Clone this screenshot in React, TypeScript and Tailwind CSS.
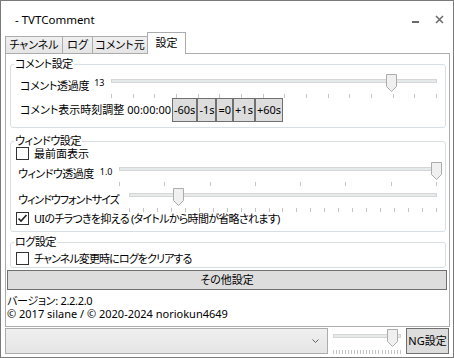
function Slider({ className, value, ticks, tickTop = 20 }: { className: string; value: number; ticks: number; tickTop?: number }) {
  return (
    <div className={`relative h-[24px] shrink-0 ${className}`}>
      <div className="absolute left-[5px] right-[5px] top-[5px] h-[4px] bg-[#e7eaea] border border-[#d6d6d6]" />
      <div className="absolute left-[5px] right-[5px] flex justify-between" style={{ top: tickTop }}>
        {Array.from({ length: ticks }).map((_, i) => (
          <div key={i} className="w-px h-[4px] bg-[#c4c4c4]" />
        ))}
      </div>
      <svg
        className="absolute top-0"
        style={{ left: `calc((100% - 11px) * ${value})` }}
        width="11"
        height="18"
        viewBox="0 0 11 18"
      >
        <path d="M0.5 0.5H10.5V12.5L5.5 17.5L0.5 12.5Z" fill="#f0f0f0" stroke="#acacac" />
      </svg>
    </div>
  )
}

function Check({ checked = false }: { checked?: boolean }) {
  return (
    <div className="w-[13px] h-[13px] shrink-0 border border-[#333] bg-white flex items-center justify-center">
      {checked && (
        <svg width="11" height="11" viewBox="0 0 11 11">
          <path d="M1.5 5.5L4 8L9.5 2" fill="none" stroke="#212121" strokeWidth="1.6" />
        </svg>
      )}
    </div>
  )
}

function Group({ title, className, children }: { title: string; className?: string; children: React.ReactNode }) {
  return (
    <fieldset className={`border border-[#d5dfe5] rounded-[3px] ml-[4px] mr-[3px] ${className ?? ''}`}>
      <legend className="ml-[3px] px-[1px] leading-[12px] tracking-[-0.4px]">{title}</legend>
      {children}
    </fieldset>
  )
}

function Btn({ children }: { children: React.ReactNode }) {
  return (
    <div className="h-[24px] px-[1px] shrink-0 flex items-center bg-[#dddddd] border border-[#707070]">{children}</div>
  )
}

export default function App() {
  return (
    <div className="w-[454px] h-[358px] bg-white border border-[#7a7a7a] flex flex-col text-[11px] text-black font-['Noto_Sans','Noto_Sans_CJK_JP',sans-serif] [font-feature-settings:'palt'] leading-[14px] whitespace-nowrap overflow-hidden">
      {/* title bar */}
      <div className="h-[31px] shrink-0 flex items-center pt-[6px] pl-[14px] pr-[9px]">
        <span className="text-[11.5px]">- TVTComment</span>
        <div className="ml-auto flex items-center gap-[16px]">
          <div className="w-[7px] h-[2px] bg-[#6a6a6a] mt-[5px]" />
          <svg width="9" height="9" viewBox="0 0 9 9">
            <path d="M1 1L8 8M8 1L1 8" stroke="#6a6a6a" strokeWidth="1.5" />
          </svg>
        </div>
      </div>

      {/* tabs */}
      <div className="h-[21px] shrink-0 flex items-end pl-[4px]">
        <div className="w-[58px] h-[17px] flex items-center justify-center border border-b-0 border-[#acacac] bg-gradient-to-b from-[#f0f0f0] to-[#e5e5e5]">チャンネル</div>
        <div className="w-[31px] h-[17px] -ml-px flex items-center justify-center border border-b-0 border-[#acacac] bg-gradient-to-b from-[#f0f0f0] to-[#e5e5e5]">ログ</div>
        <div className="w-[56px] h-[17px] -ml-px flex items-center justify-center border border-b-0 border-[#acacac] bg-gradient-to-b from-[#f0f0f0] to-[#e5e5e5]">コメント元</div>
        <div className="w-[39px] h-[22px] -ml-px -mb-px relative z-10 flex items-center justify-center pb-[2px] border border-b-0 border-[#acacac] bg-white">設定</div>
      </div>

      {/* panel */}
      <div className="h-[274px] shrink-0 ml-[4px] mr-[3px] border border-[#acacac] flex flex-col overflow-hidden">
        <Group title="コメント設定" className="mt-[4px] pb-[5px]">
          <div className="mt-[4px] h-[24px] flex items-center pl-[9px] pr-[3px]">
            <span className="tracking-[-0.3px]">コメント透過度</span>
            <span className="self-start mt-[4px] ml-[5px] text-[9px] leading-[10px]">13</span>
            <Slider className="ml-auto self-start w-[336px]" value={0.862} ticks={16} />
          </div>
          <div className="h-[24px] flex items-center pl-[9px]">
            <span>コメント表示時刻調整</span>
            <span className="ml-[3px] mr-px">00:00:00</span>
            <Btn>-60s</Btn>
            <Btn>-1s</Btn>
            <Btn>=0</Btn>
            <Btn>+1s</Btn>
            <Btn>+60s</Btn>
          </div>
        </Group>

        <Group title="ウィンドウ設定" className="mt-[7px] pb-[6px]">
          <div className="h-[13px] flex items-center pl-[5px]">
            <Check />
            <span className="ml-[5px] leading-[12px]">最前面表示</span>
          </div>
          <div className="mt-[2px] h-[24px] flex items-center pl-[7px] pr-[3px]">
            <span className="tracking-[-0.5px]">ウィンドウ透過度</span>
            <span className="self-start mt-[5px] ml-[6px] text-[9px] leading-[10px]">1.0</span>
            <Slider className="ml-auto self-start w-[328px]" value={1} ticks={8} />
          </div>
          <div className="mt-[2px] h-[24px] flex items-center pl-[7px] pr-[3px]">
            <span className="tracking-[-1px]">ウィンドウフォントサイズ</span>
            <Slider className="ml-auto self-start w-[318px]" value={0.16} ticks={23} />
          </div>
          <div className="h-[13px] flex items-center pl-[5px]">
            <Check checked />
            <span className="ml-[5px] tracking-[-0.7px]">UIのチラつきを抑える (タイトルから時間が省略されます)</span>
          </div>
        </Group>

        <Group title="ログ設定" className="mt-[4px] pb-[2px]">
          <div className="mt-[4px] h-[13px] flex items-center pl-[5px]">
            <Check />
            <span className="ml-[5px] tracking-[-0.9px]">チャンネル変更時にログをクリアする</span>
          </div>
        </Group>

        <div className="mt-[2px] ml-px mr-[2px] h-[20px] shrink-0 flex items-center justify-center bg-[#dddddd] border border-[#707070]">その他設定</div>

        <div className="mt-[5px] pl-px leading-[12px] tracking-[-0.3px]">バージョン: 2.2.2.0</div>
        <div className="mt-px pl-px leading-[12px]">© 2017 silane / © 2020-2024 noriokun4649</div>
      </div>

      {/* bottom bar */}
      <div className="mt-px h-[26px] shrink-0 flex items-start pl-[4px]">
        <div className="w-[323px] h-[26px] shrink-0 flex items-center justify-end pr-[8px] border border-[#acacac] bg-gradient-to-b from-[#f0f0f0] to-[#e5e5e5]">
          <svg width="7" height="4" viewBox="0 0 7 4">
            <path d="M0.5 0.5L3.5 3.5L6.5 0.5" fill="none" stroke="#606060" />
          </svg>
        </div>
        <Slider className="mt-px w-[78px]" value={0.875} ticks={23} tickTop={21} />
        <div className="w-[43px] h-[26px] shrink-0 flex items-center justify-center bg-[#dddddd] border border-[#707070]">NG設定</div>
      </div>
    </div>
  )
}
